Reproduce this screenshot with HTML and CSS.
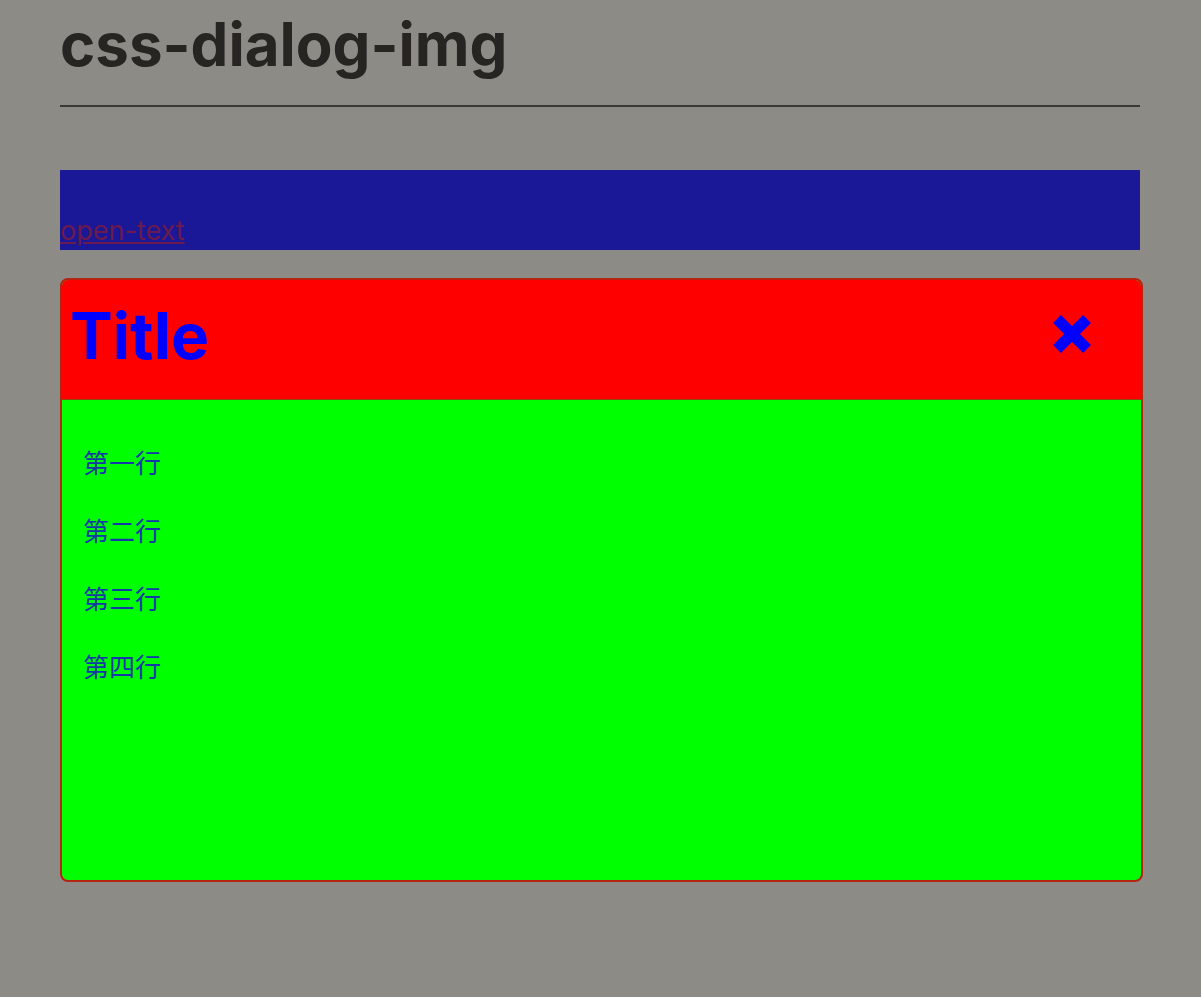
FILE: index.html
```html
<!DOCTYPE html>
<html lang="zh-CN">
   <head>
      <meta charset="UTF-8">
      <meta name="viewport" content="width=device-width, initial-scale=1.0">
      <link rel="stylesheet" href="styles.css">
      <title>css-dialog-img</title>
   </head>
   <body>
      <div class="page">
         <h1 class="page-title">css-dialog-img</h1>
         <div class="opener">
            <a href="#" class="open-link">open-text</a>
         </div>
         <div class="dialog">
            <div class="dialog-head">
               <h2 class="dialog-title">Title</h2>
               <button class="close-btn" aria-label="close">
                  <svg width="42" height="42" viewBox="0 0 42 42">
                     <path d="M6 6 L36 36 M36 6 L6 36" stroke="#0000ff" stroke-width="11" fill="none"/>
                  </svg>
               </button>
            </div>
            <div class="dialog-body">
               <p>第一行</p>
               <p>第二行</p>
               <p>第三行</p>
               <p>第四行</p>
            </div>
         </div>
      </div>
   </body>
</html>
```
FILE: styles.css
```css
body {
margin: 0;
background-color: #8c8b85;
font-family: Inter, "Noto Sans CJK SC", sans-serif;
color: #272522;
}
.page {
width: 1080px;
margin-left: 60px;
padding-bottom: 60px;
}
.page-title {
margin: 0;
padding: 8px 0 25px;
font-size: 60px;
line-height: 72px;
font-weight: 700;
border-bottom: 2px solid #3a3936;
}
.opener {
margin-top: 63px;
height: 80px;
background-color: #1a1896;
display: flex;
align-items: flex-end;
}
.open-link {
color: #6a1a4e;
font-size: 27px;
line-height: 38px;
}
.dialog {
margin-top: 28px;
width: 1079px;
height: 600px;
border: 2px solid #b52412;
border-radius: 8px;
overflow: hidden;
background-color: #00ff00;
display: flex;
flex-direction: column;
}
.dialog-head {
height: 119px;
background-color: #ff0000;
border-bottom: 1px solid #8a4a10;
display: flex;
align-items: center;
justify-content: space-between;
padding: 0 48px 0 8px;
}
.dialog-title {
margin: 0 0 8px;
color: #0000ff;
font-size: 64px;
font-weight: 700;
}
.close-btn {
border: none;
background: none;
padding: 0;
margin-bottom: 12px;
cursor: pointer;
display: flex;
}
.dialog-body {
padding: 45px 21px;
color: #1438a8;
font-size: 26px;
}
.dialog-body p {
margin: 0 0 30px;
line-height: 38px;
}
```
